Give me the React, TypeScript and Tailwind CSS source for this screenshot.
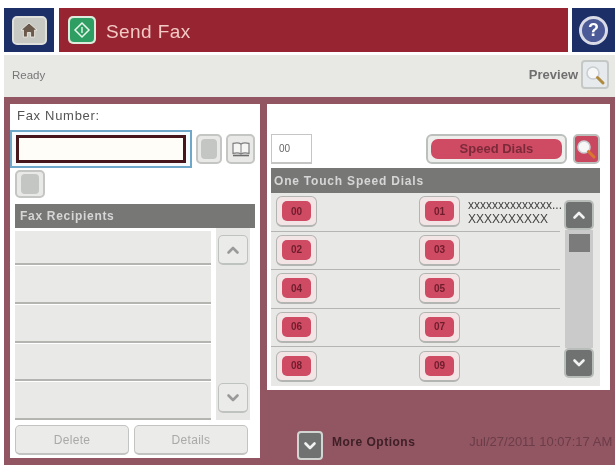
import React from "react";

const font = "font-['Liberation_Sans',Arial,sans-serif]";

const Chevron = ({ dir, color, size = 14 }: { dir: "up" | "down"; color: string; size?: number }) => (
  <svg width={size} height={size} viewBox="0 0 14 14" fill="none">
    <path
      d={dir === "up" ? "M2.5 9.5 7 5l4.5 4.5" : "M2.5 4.5 7 9l4.5-4.5"}
      stroke={color}
      strokeWidth="2.6"
      strokeLinecap="round"
      strokeLinejoin="round"
    />
  </svg>
);

const Magnifier = ({ handle }: { handle: string }) => (
  <svg width="22" height="22" viewBox="0 0 22 22" fill="none">
    <circle cx="9" cy="9" r="6" fill="#f7f7f7" stroke="#c9ced2" strokeWidth="1.6" />
    <path d="M13.5 13.5 19 19" stroke={handle} strokeWidth="3" strokeLinecap="round" />
  </svg>
);

const DialButton = ({ label }: { label: string }) => (
  <div className="w-[41px] h-[31px] shrink-0 px-[5px] py-[4px] rounded-[6px] border border-[#b3b5b2] border-b-2 bg-[#f3e4e5]">
    <div className="w-full h-full rounded-[5px] bg-[#cf4a63] flex items-center justify-center text-[10px] font-bold text-[#6e1d2c]">
      {label}
    </div>
  </div>
);

const GrayIconButton = ({ children, className }: { children?: React.ReactNode; className?: string }) => (
  <div className={`rounded-[5px] border-2 border-[#c4c6c3] bg-[#e9e9e7] flex items-center justify-center ${className ?? ""}`}>
    {children}
  </div>
);

const DisabledButton = ({ label }: { label: string }) => (
  <div className="w-[114px] h-[30px] rounded-[5px] border border-[#c2c4c1] border-b-2 bg-[#ebebe9] flex items-center justify-center text-[12px] tracking-[0.3px] text-[#a9a9a9]">
    {label}
  </div>
);

const ScrollArrow = ({ dir }: { dir: "up" | "down" }) => (
  <div className="w-[30px] h-[30px] rounded-[5px] border border-[#bfc3c0] border-b-2 bg-[#ebebe9] flex items-center justify-center">
    <Chevron dir={dir} color="#9a9a9a" />
  </div>
);

const DarkArrow = ({ dir }: { dir: "up" | "down" }) => (
  <div className="w-[30px] h-[30px] rounded-[5px] border-2 border-[#b9bdba] bg-[#6f7271] flex items-center justify-center">
    <Chevron dir={dir} color="#f2f2f2" />
  </div>
);

const rows = [
  ["00", "01"],
  ["02", "03"],
  ["04", "05"],
  ["06", "07"],
  ["08", "09"],
];

const recipientRows = ["h-[34px]", "h-[37.75px]", "h-[37.75px]", "h-[37.75px]", "h-[37.75px]"];

export default function App() {
  return (
    <div className={`w-[615px] h-[465px] bg-white flex flex-col pt-2 pl-1 overflow-hidden blur-[0.4px] ${font}`}>
      {/* title bar */}
      <div className="flex h-[44px] shrink-0">
        <div className="w-[50px] bg-[#1c2f66] flex items-center justify-center">
          <div className="w-[35px] h-[29px] rounded-[5px] bg-[#c9c9c4] border-2 border-[#dfe0dc] flex items-center justify-center">
            <svg width="18" height="16" viewBox="0 0 18 16">
              <path d="M9 1 1 8h2.4v7h4V10.5h3.2V15h4V8H17Z" fill="#6b5a4c" stroke="#f4f1ea" strokeWidth="0.8" />
            </svg>
          </div>
        </div>
        <div className="w-[509px] ml-[5px] bg-[#962431] flex items-center pl-[9px]">
          <div className="w-[28px] h-[28px] rounded-[5px] bg-[#dcebdc] p-[2px]">
            <div className="w-full h-full rounded-[4px] bg-[#2f9e62] flex items-center justify-center">
              <svg width="18" height="18" viewBox="0 0 18 18" fill="none">
                <path d="M9 2 16 9 9 16 2 9Z" stroke="#e7f5ea" strokeWidth="1.5" />
                <path d="M9 6v6" stroke="#e7f5ea" strokeWidth="1.4" />
              </svg>
            </div>
          </div>
          <span className="ml-[10px] mt-[4px] text-[19px] tracking-[0.4px] text-[#f3c9c4]">Send Fax</span>
        </div>
        <div className="w-[43px] ml-[4px] bg-[#1c2f66] flex items-center justify-center">
          <div className="w-[29px] h-[29px] rounded-full bg-[#4c5a97] border-[3px] border-[#d9dbe6] flex items-center justify-center text-[18px] font-bold text-white">
            ?
          </div>
        </div>
      </div>

      {/* status bar */}
      <div className="mt-[3px] h-[42px] shrink-0 bg-[#e8e8e4] flex items-center justify-between pl-2 pr-[6px]">
        <span className="text-[11.5px] text-[#77777a]">Ready</span>
        <div className="flex items-center mb-[3px]">
          <span className="text-[13px] font-bold text-[#6f6f70] mr-[3px]">Preview</span>
          <div className="w-[28px] h-[29px] rounded-[4px] border-2 border-[#c4c8c6] bg-[#e6eaec] flex items-center justify-center">
            <Magnifier handle="#b08a3c" />
          </div>
        </div>
      </div>

      {/* main area */}
      <div className="flex-1 bg-[#925562] flex pt-[7px] pb-[7px] pl-[6px] gap-[7px]">
        {/* fax number panel */}
        <div className="w-[250px] bg-white flex flex-col pl-[5px] pr-[5px]">
          <div className="h-[26px] pt-[5px] pl-[2px] text-[13px] leading-[14px] text-[#555] tracking-[0.7px]">Fax Number:</div>
          <div className="flex items-center -ml-[5px] gap-[4px]">
            <div className="w-[183px] h-[38px] border-2 border-[#6ea7c9] bg-[#f7fbfd] p-[3px] px-[4px]">
              <div className="w-full h-full border-[3px] border-[#47161c] bg-[#fffdf8]" />
            </div>
            <GrayIconButton className="w-[26px] h-[30px]">
              <div className="w-[16px] h-[20px] rounded-[4px] bg-[#c4c6c4]" />
            </GrayIconButton>
            <GrayIconButton className="w-[29px] h-[30px]">
              <svg width="20" height="16" viewBox="0 0 20 16" fill="none">
                <path d="M10 3C8 1.6 5 1.6 2 2.4v10c3-.8 6-.8 8 .6 2-1.4 5-1.4 8-.6v-10C15 1.6 12 1.6 10 3Z" fill="#f5f5f3" stroke="#7c7e7e" strokeWidth="1.2" />
                <path d="M10 3v10" stroke="#7c7e7e" strokeWidth="1" />
                <path d="M2 14.5h16" stroke="#6b6d6d" strokeWidth="1.6" />
              </svg>
            </GrayIconButton>
          </div>
          <GrayIconButton className="mt-[2px] w-[30px] h-[28px]">
            <div className="w-[18px] h-[20px] rounded-[4px] bg-[#c4c6c4]" />
          </GrayIconButton>
          <div className="mt-[6px] h-[24px] bg-[#777776] flex items-center pl-[5px] text-[12px] font-bold tracking-[0.7px] text-[#d6d6d6]">
            Fax Recipients
          </div>
          <div className="flex h-[192px]">
            <div className="w-[196px] flex flex-col gap-[1px] pt-[3px]">
              {recipientRows.map((h, i) => (
                <div key={i} className={`${h} bg-[#e9e9e7] border-b-2 border-[#b4b5b1]`} />
              ))}
            </div>
            <div className="w-[34px] ml-[5px] bg-[#e7e7e5] flex flex-col justify-between items-center pt-[7px] pb-[7px]">
              <ScrollArrow dir="up" />
              <ScrollArrow dir="down" />
            </div>
          </div>
          <div className="flex gap-[5px] mt-[5px]">
            <DisabledButton label="Delete" />
            <DisabledButton label="Details" />
          </div>
        </div>

        {/* speed dial column */}
        <div className="w-[343px] flex flex-col">
          <div className="h-[286px] bg-white flex flex-col pl-[4px] pr-[10px]">
            <div className="flex items-center h-[64px] pt-[30px] pb-[4px] shrink-0">
              <div className="w-[42px] h-[30px] bg-white border border-[#c5c6c4] border-b-2 flex items-center pl-[7px] text-[10px] text-[#666]">
                00
              </div>
              <div className="ml-[114px] w-[143px] h-[30px] rounded-[6px] border-2 border-[#bcc0bd] bg-[#eeeeec] p-[3px]">
                <div className="w-full h-full rounded-[7px] bg-[#cf4a63] flex items-center justify-center text-[13px] font-bold text-[#7c2a3a]">
                  Speed Dials
                </div>
              </div>
              <div className="ml-[6px] w-[28px] h-[30px] rounded-[5px] border-2 border-[#bcc0bd] bg-[#c9485f] flex items-center justify-center">
                <Magnifier handle="#d9772f" />
              </div>
            </div>
            <div className="h-[25px] w-[329px] shrink-0 bg-[#777776] flex items-center pl-[3px] text-[12px] font-bold tracking-[0.8px] text-[#d6d6d6]">
              One Touch Speed Dials
            </div>
            <div className="flex w-[329px] flex-1 mb-[4px] bg-[#e8e8e6]">
              <div className="w-[289px] flex flex-col">
                {rows.map(([a, b], i) => (
                  <div
                    key={a}
                    className={`h-[38.5px] flex items-center gap-[102px] pl-[5px] ${i < 4 ? "border-b border-[#b5b6b3]" : ""}`}
                  >
                    <DialButton label={a} />
                    <div className="flex items-center gap-[8px] shrink-0">
                      <DialButton label={b} />
                      {i === 0 && (
                        <div className="whitespace-nowrap text-[12px] leading-[14px] text-[#444]">
                          <div>xxxxxxxxxxxxxx...</div>
                          <div>XXXXXXXXXX</div>
                        </div>
                      )}
                    </div>
                  </div>
                ))}
              </div>
              <div className="w-[30px] ml-[4px] flex flex-col items-center pt-[7px] pb-[8px]">
                <DarkArrow dir="up" />
                <div className="flex-1 w-[28px] bg-[#c9cac9] pt-[4px] flex justify-center">
                  <div className="w-[21px] h-[18px] bg-[#7b7b7b]" />
                </div>
                <DarkArrow dir="down" />
              </div>
            </div>
          </div>

          {/* footer */}
          <div className="flex-1 flex items-end pl-[30px]">
            <div className="w-[26px] h-[29px] shrink-0 -mb-[2px] rounded-[4px] border-2 border-[#d3d5d2] bg-[#6f7271] flex items-center justify-center">
              <Chevron dir="down" color="#f2f2f2" />
            </div>
            <span className="ml-[9px] mb-[7px] whitespace-nowrap text-[12px] font-bold tracking-[0.5px] text-[#3f2027]">More Options</span>
            <span className="ml-[54px] mb-[7px] whitespace-nowrap text-[13px] text-[#6b3d48]">Jul/27/2011 10:07:17 AM</span>
          </div>
        </div>
      </div>
    </div>
  );
}
